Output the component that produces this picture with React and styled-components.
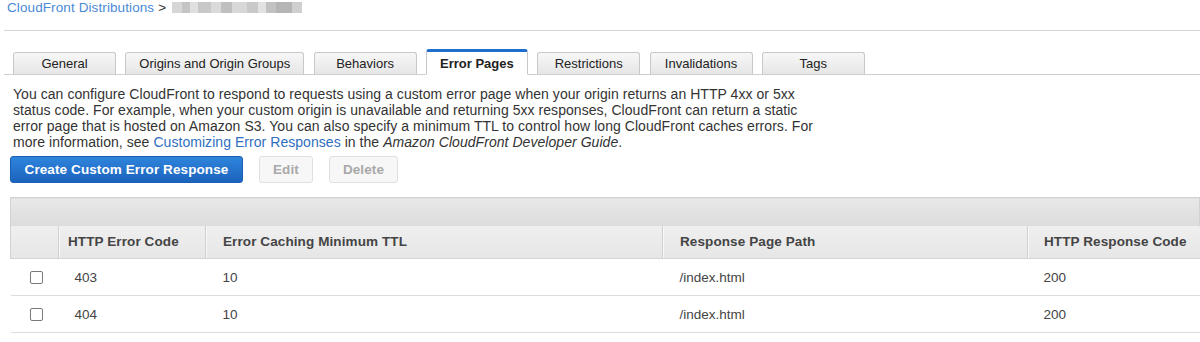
import React from "react";
import styled, { createGlobalStyle } from "styled-components";

const GlobalStyle = createGlobalStyle`
  body {
    margin: 0;
    background: #fff;
    font-family: "Liberation Sans", Arial, sans-serif;
    font-size: 13px;
    color: #333;
  }
`;

const Page = styled.div`
  width: 1200px;
  padding-left: 4px;
  box-sizing: border-box;
  overflow: hidden;
`;

const Breadcrumb = styled.div`
  display: flex;
  align-items: center;
  height: 16px;
  padding: 0 0 0 3px;
  line-height: 16px;
  font-size: 13.5px;
  letter-spacing: 0.1px;
  color: #333;
`;

const CrumbLink = styled.a`
  color: #4a8ad6;
  text-decoration: none;
  margin-right: 4px;
`;

const Blurred = styled.span`
  display: inline-block;
  width: 130px;
  height: 11px;
  margin-left: 6px;
  margin-top: -2px;
  background: linear-gradient(
    90deg,
    #d6d6d6 0 8%,
    #c4c4c4 8% 14%,
    #e0e0e0 14% 20%,
    #c8c8c8 20% 30%,
    #dadada 30% 38%,
    #bfbfbf 38% 46%,
    #d8d8d8 46% 58%,
    #c9c9c9 58% 66%,
    #e2e2e2 66% 72%,
    #c2c2c2 72% 80%,
    #b5b5b5 80% 92%,
    #cfcfcf 92% 100%
  );
  filter: blur(0.6px);
`;

const Divider = styled.div`
  height: 1px;
  margin-top: 14px;
  background: #d6d6d6;
`;

const TabRow = styled.div`
  display: flex;
  align-items: flex-end;
  gap: 9.3px;
  height: 44px;
  padding-left: 9px;
  border-bottom: 1px solid #cfcfcf;
  box-sizing: border-box;
`;

const Tab = styled.div`
  box-sizing: border-box;
  min-width: ${(p) => (p.active ? "102px" : "103px")};
  height: ${(p) => (p.active ? "26px" : "23px")};
  padding: 0 13px;
  margin-bottom: -1px;
  display: flex;
  align-items: center;
  justify-content: center;
  border: 1px solid #c8c8c8;
  border-bottom: ${(p) => (p.active ? "1px solid #fff" : "1px solid #cfcfcf")};
  border-top: ${(p) => (p.active ? "3px solid #1e6fcd" : "1px solid #c8c8c8")};
  border-radius: 3px 3px 0 0;
  background: ${(p) =>
    p.active ? "#fff" : "linear-gradient(#f7f7f7, #e6e6e6)"};
  color: #222;
  font-weight: ${(p) => (p.active ? "bold" : "normal")};
  white-space: nowrap;
  cursor: pointer;
`;

const Content = styled.div`
  padding-left: 6px;
`;

const Intro = styled.p`
  margin: 11px 0 0 3px;
  width: 804px;
  font-size: 14px;
  letter-spacing: 0.05px;
  line-height: 16px;
  color: #333;
`;

const DocLink = styled.a`
  color: #2f6fbf;
  text-decoration: none;
`;

const Actions = styled.div`
  display: flex;
  gap: 16px;
  margin-top: 6px;
`;

const Button = styled.button`
  box-sizing: border-box;
  height: 27px;
  padding: 0 ${(p) => (p.primary ? "0" : "13px")};
  border-radius: 3px;
  font-family: inherit;
  font-size: 13.5px;
  letter-spacing: 0.1px;
  font-weight: bold;
  white-space: nowrap;
  border: 1px solid ${(p) => (p.primary ? "#1a5fb4" : "#e0e0e0")};
  background: ${(p) =>
    p.primary ? "linear-gradient(#2f84dc, #1b63bd)" : "#f7f7f7"};
  color: ${(p) => (p.primary ? "#fff" : "#a9a9a9")};
  ${(p) => (p.primary ? "width: 233px;" : "")}
`;

const Table = styled.table`
  margin-top: 14px;
  width: 1190px;
  border-collapse: collapse;
  table-layout: fixed;
`;

const TopBar = styled.th`
  height: 28px;
  padding: 0;
  box-sizing: border-box;
  border: 1px solid #d2d2d2;
  border-bottom: none;
  background: linear-gradient(#e8e8e8, #dcdcdc);
`;

const HeadCell = styled.th`
  height: 33px;
  padding: 0 0 0 ${(p) => p.pad || 17}px;
  box-sizing: border-box;
  text-align: left;
  font-size: 13.5px;
  letter-spacing: 0.1px;
  font-weight: bold;
  color: #444;
  background: linear-gradient(#efefef, #e6e6e6);
  border-left: 1px solid #d0d0d0;
  box-shadow: inset 1px 0 0 #f8f8f8;
  border-bottom: 1px solid #d4d4d4;
  white-space: nowrap;
  &:first-child {
    border-left: 1px solid #d2d2d2;
    box-shadow: none;
  }
`;

const Cell = styled.td`
  height: 37px;
  padding: 0 0 0 ${(p) => p.pad || 17}px;
  box-sizing: border-box;
  font-size: 13.5px;
  color: #444;
  border-bottom: 1px solid #dcdcdc;
`;

const CheckCell = styled.td`
  height: 37px;
  padding: 0 0 0 19px;
  box-sizing: border-box;
  border-bottom: 1px solid #dcdcdc;
`;

const Check = styled.span`
  display: block;
  width: 13px;
  height: 13px;
  box-sizing: border-box;
  border: 1px solid #7a7a7a;
  border-radius: 2px;
  background: #fff;
`;

const tabs = [
  "General",
  "Origins and Origin Groups",
  "Behaviors",
  "Error Pages",
  "Restrictions",
  "Invalidations",
  "Tags",
];

const rows = [
  { code: "403", ttl: "10", path: "/index.html", response: "200" },
  { code: "404", ttl: "10", path: "/index.html", response: "200" },
];

export default function App() {
  return (
    <Page>
      <GlobalStyle />
      <Breadcrumb>
        <CrumbLink href="#">CloudFront Distributions</CrumbLink>
        &gt;
        <Blurred />
      </Breadcrumb>
      <Divider />
      <TabRow>
        {tabs.map((t) => (
          <Tab key={t} active={t === "Error Pages"}>
            {t}
          </Tab>
        ))}
      </TabRow>
      <Content>
        <Intro>
          You can configure CloudFront to respond to requests using a custom
          error page when your origin returns an HTTP 4xx or 5xx status code.
          For example, when your custom origin is unavailable and returning 5xx
          responses, CloudFront can return a static error page that is hosted
          on Amazon S3. You can also specify a minimum TTL to control how long
          CloudFront caches errors. For more information, see{" "}
          <DocLink href="#">Customizing Error Responses</DocLink> in the{" "}
          <i>Amazon CloudFront Developer Guide</i>.
        </Intro>
        <Actions>
          <Button primary>Create Custom Error Response</Button>
          <Button disabled>Edit</Button>
          <Button disabled>Delete</Button>
        </Actions>
        <Table>
          <colgroup>
            <col style={{ width: 48 }} />
            <col style={{ width: 147 }} />
            <col style={{ width: 457 }} />
            <col style={{ width: 365 }} />
            <col />
          </colgroup>
          <thead>
            <tr>
              <TopBar colSpan={5} />
            </tr>
            <tr>
              <HeadCell />
              <HeadCell pad={9}>HTTP Error Code</HeadCell>
              <HeadCell>Error Caching Minimum TTL</HeadCell>
              <HeadCell>Response Page Path</HeadCell>
              <HeadCell pad={16}>HTTP Response Code</HeadCell>
            </tr>
          </thead>
          <tbody>
            {rows.map((r) => (
              <tr key={r.code}>
                <CheckCell>
                  <Check />
                </CheckCell>
                <Cell pad={16}>{r.code}</Cell>
                <Cell>{r.ttl}</Cell>
                <Cell>{r.path}</Cell>
                <Cell pad={16}>{r.response}</Cell>
              </tr>
            ))}
          </tbody>
        </Table>
      </Content>
    </Page>
  );
}
